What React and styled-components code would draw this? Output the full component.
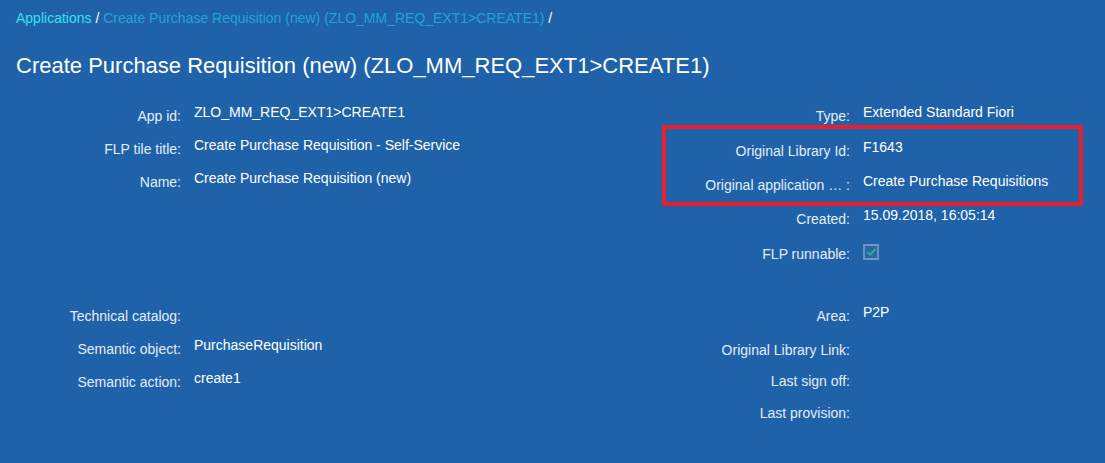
import React from "react";
import styled, { createGlobalStyle } from "styled-components";

const GlobalStyle = createGlobalStyle`
  html, body {
    margin: 0;
    padding: 0;
    background: #1f62a9;
  }
  body {
    font-family: "Liberation Sans", Arial, sans-serif;
    font-size: 14px;
    color: #ffffff;
  }
`;

const Page = styled.div`
  width: 1105px;
  height: 463px;
  background: #1f62a9;
  padding: 0 16px;
  box-sizing: border-box;
  overflow: hidden;
`;

const Breadcrumbs = styled.div`
  padding-top: 9px;
  height: 18px;
  line-height: 18px;
  font-size: 14px;
  color: #ffffff;
`;

const Crumb = styled.span`
  color: ${(p) => (p.$current ? "#22a3d6" : "#33e3f2")};
`;

const Title = styled.h1`
  margin: 0;
  margin-top: 26px;
  font-size: 22px;
  font-weight: normal;
  line-height: 26px;
  color: #ffffff;
`;

const Section = styled.div`
  display: grid;
  grid-template-columns: 536px 1fr;
  margin-top: ${(p) => p.$top}px;
`;

const Column = styled.div`
  display: flex;
  flex-direction: column;
`;

const Row = styled.div`
  display: grid;
  grid-template-columns: ${(p) => p.$label}px 1fr;
  column-gap: 13px;
  height: ${(p) => p.$h}px;
  align-items: start;
`;

const Label = styled.div`
  text-align: right;
  padding-top: 7px;
  line-height: 18px;
  color: #e3edf7;
  white-space: nowrap;
`;

const Value = styled.div`
  padding-top: 3px;
  line-height: 18px;
  color: #ffffff;
  white-space: nowrap;
`;

const Highlight = styled.div`
  position: relative;
  &::after {
    content: "";
    position: absolute;
    left: 110px;
    right: 6px;
    top: -10px;
    bottom: -3px;
    border: 4px solid #e9202b;
    pointer-events: none;
  }
`;

const Check = styled.span`
  display: inline-flex;
  align-items: center;
  justify-content: center;
  width: 16px;
  height: 16px;
  box-sizing: border-box;
  border: 2px solid #6f93bd;
  background: #2a68a8;
  margin-top: 3px;
`;

const Field = ({ label, value, labelWidth, h, children }) => (
  <Row $label={labelWidth} $h={h}>
    <Label>{label}</Label>
    <Value>{children ?? value}</Value>
  </Row>
);

export default function App() {
  const L = 165;
  const R = 298;
  return (
    <>
      <GlobalStyle />
      <Page>
        <Breadcrumbs>
          <Crumb>Applications</Crumb> /{" "}
          <Crumb $current>Create Purchase Requisition (new) (ZLO_MM_REQ_EXT1&gt;CREATE1)</Crumb> /
        </Breadcrumbs>
        <Title>Create Purchase Requisition (new) (ZLO_MM_REQ_EXT1&gt;CREATE1)</Title>

        <Section $top={21}>
          <Column>
            <Field labelWidth={L} h={33} label="App id:" value="ZLO_MM_REQ_EXT1>CREATE1" />
            <Field labelWidth={L} h={33} label="FLP tile title:" value="Create Purchase Requisition - Self-Service" />
            <Field labelWidth={L} h={33} label="Name:" value="Create Purchase Requisition (new)" />
          </Column>
          <Column>
            <Field labelWidth={R} h={34.5} label="Type:" value="Extended Standard Fiori" />
            <Highlight>
              <Field labelWidth={R} h={34} label="Original Library Id:" value="F1643" />
              <Field labelWidth={R} h={34} label="Original application …  :" value="Create Purchase Requisitions" />
            </Highlight>
            <Field labelWidth={R} h={35} label="Created:" value="15.09.2018, 16:05:14" />
            <Field labelWidth={R} h={34} label="FLP runnable:">
              <Check>
                <svg width="11" height="10" viewBox="0 0 11 10">
                  <path d="M1.5 5.2 L4.2 7.8 L9.5 1.8" fill="none" stroke="#2fb08c" strokeWidth="1.8" />
                </svg>
              </Check>
            </Field>
          </Column>
        </Section>

        <Section $top={28}>
          <Column>
            <Field labelWidth={L} h={33} label="Technical catalog:" value="" />
            <Field labelWidth={L} h={33} label="Semantic object:" value="PurchaseRequisition" />
            <Field labelWidth={L} h={33} label="Semantic action:" value="create1" />
          </Column>
          <Column>
            <Field labelWidth={R} h={34} label="Area:" value="P2P" />
            <Field labelWidth={R} h={31.5} label="Original Library Link:" value="" />
            <Field labelWidth={R} h={32} label="Last sign off:" value="" />
            <Field labelWidth={R} h={32} label="Last provision:" value="" />
          </Column>
        </Section>
      </Page>
    </>
  );
}
